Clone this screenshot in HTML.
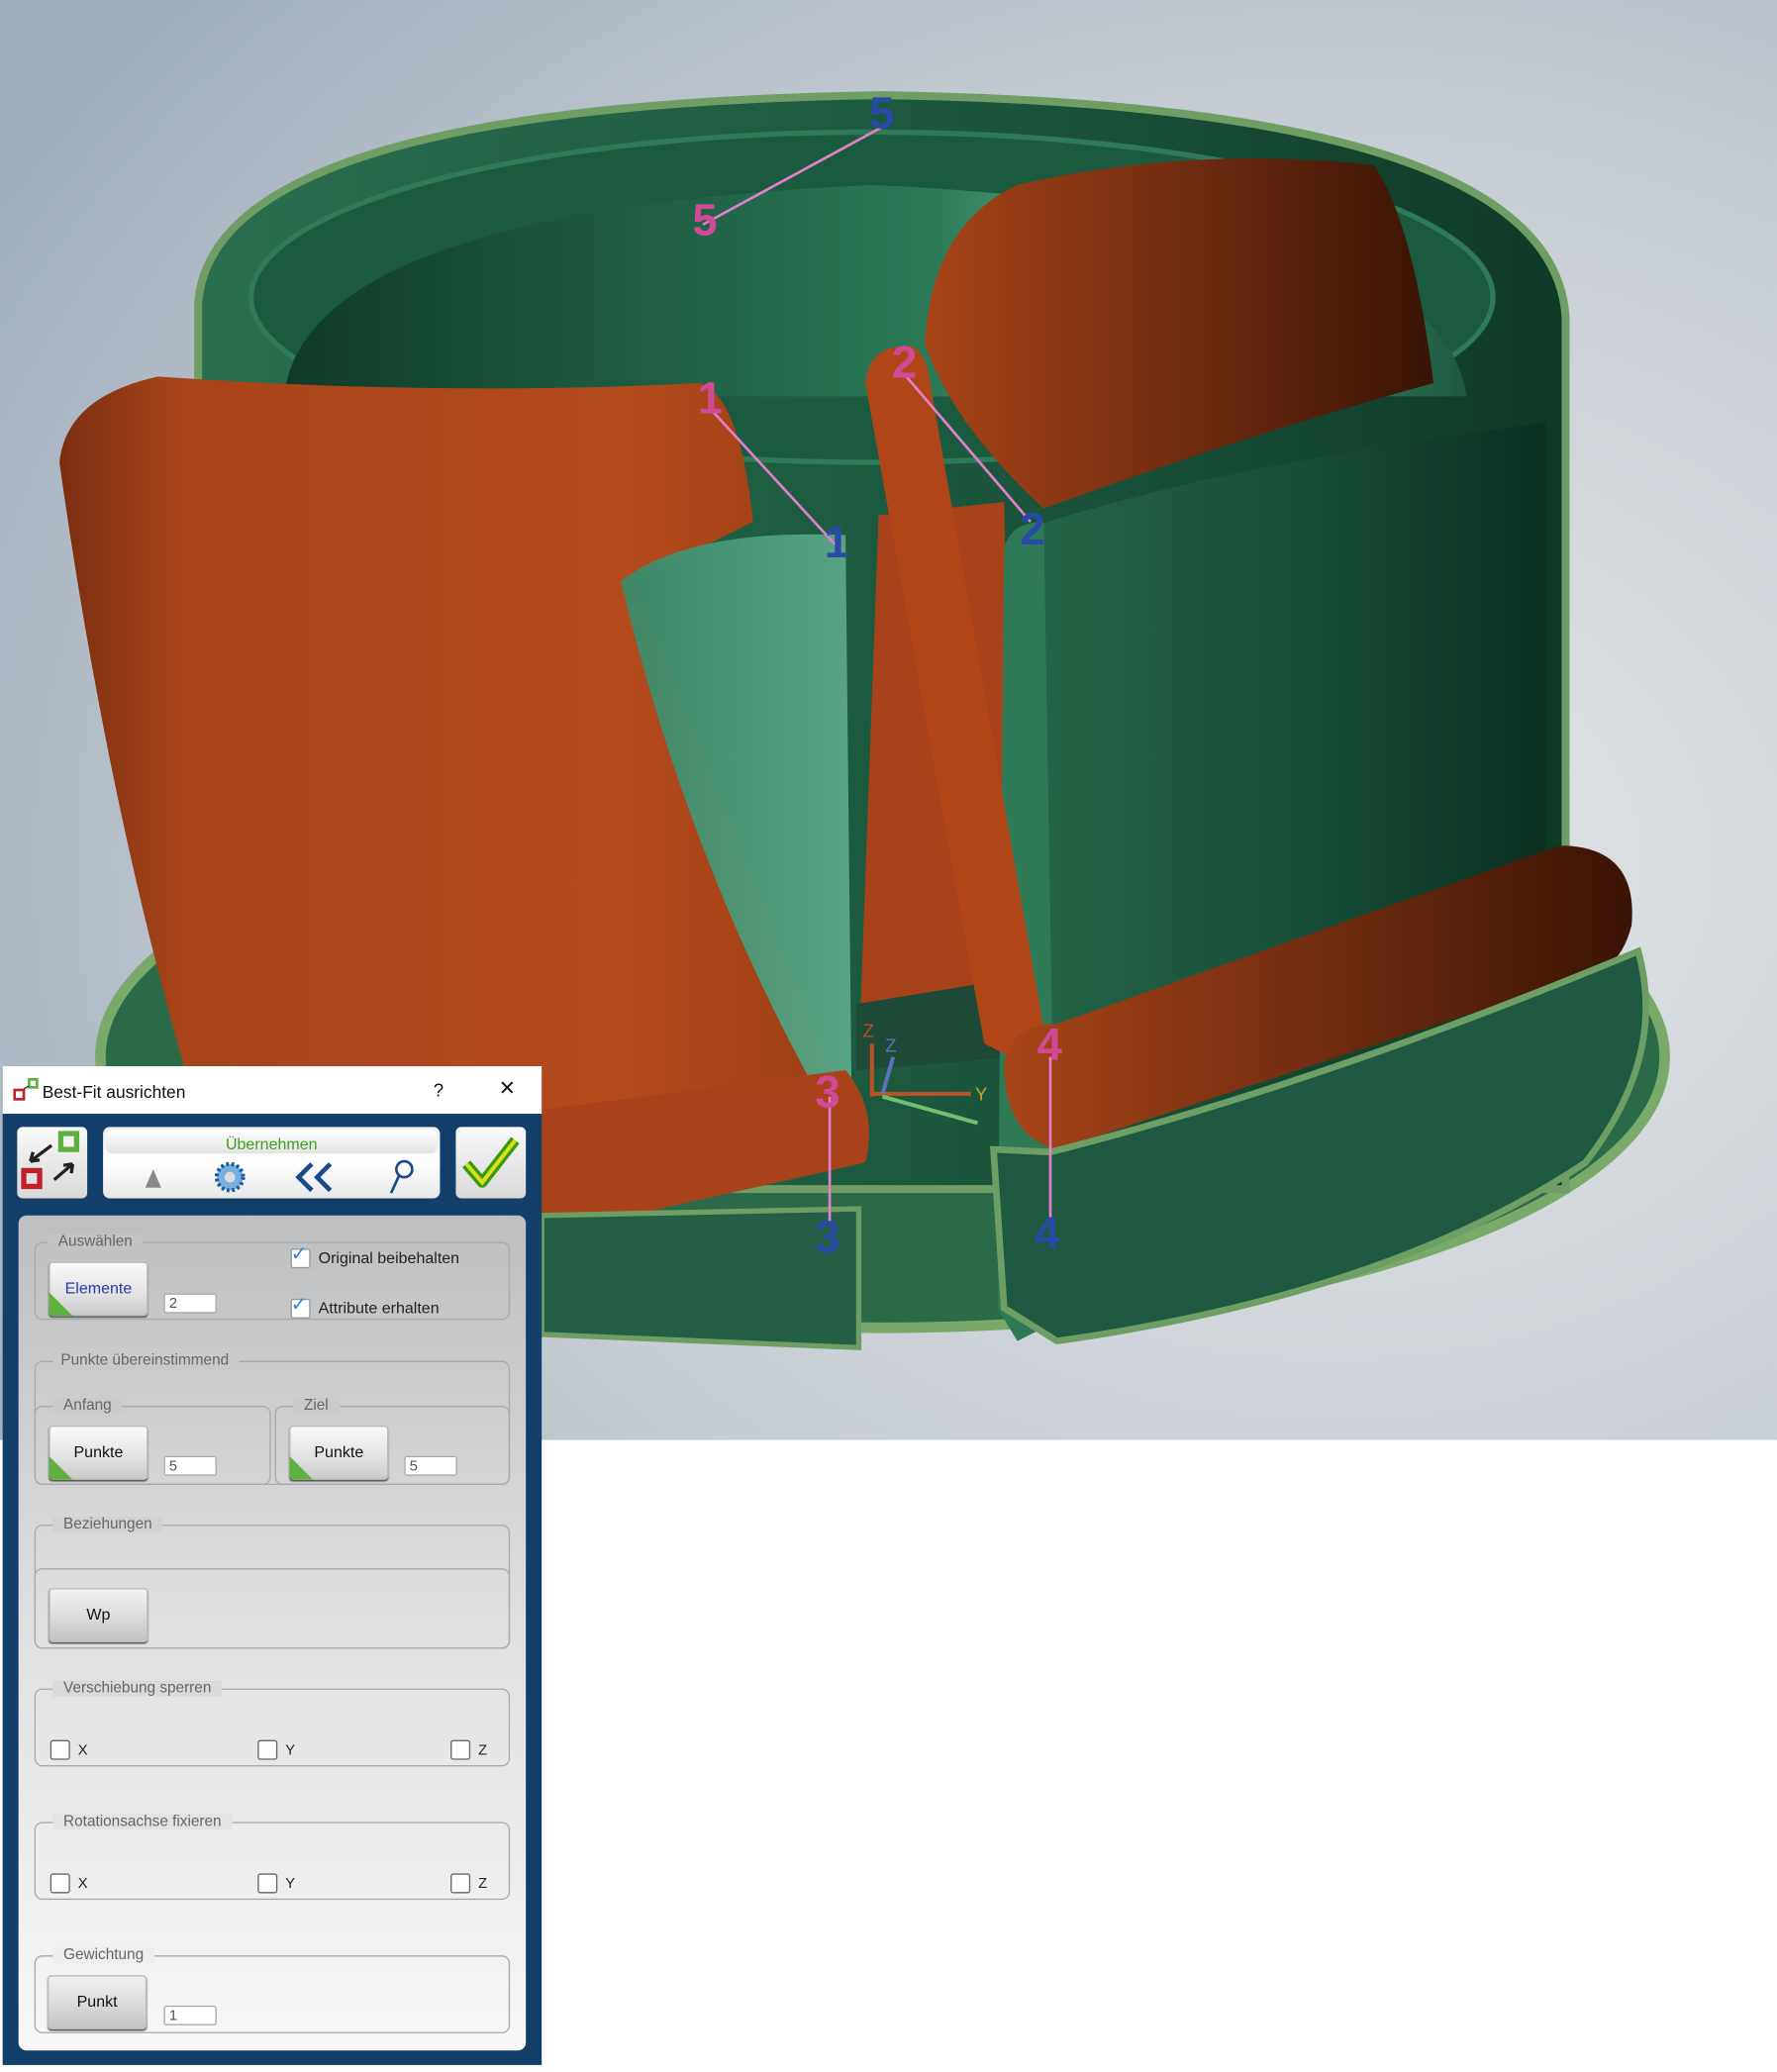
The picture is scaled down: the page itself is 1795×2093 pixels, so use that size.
<!DOCTYPE html>
<html><head><meta charset="utf-8"><style>
html,body{margin:0;padding:0;background:#fff;width:1795px;height:2092px;overflow:hidden}
#w{position:absolute;left:0;top:0;width:1345px;height:1568px;transform:scale(1.33457);transform-origin:0 0;font-family:"Liberation Sans",sans-serif}
.a{position:absolute}
.dlg{left:2px;top:807px;width:408px;height:756px;background:#123f6a}
.tb{left:0;top:0;width:408px;height:36px;background:#fff;font-size:13px;color:#111}
.btn{position:absolute;width:75px;height:41px;border-radius:3px;background:linear-gradient(#fbfbfb,#e2e2e2 60%,#c9c9c9);box-shadow:0 1px 1px #555,inset 0 0 0 1px #bbb;font-size:12px;text-align:center;line-height:41px;color:#111;overflow:hidden}
.btn i{position:absolute;left:0;bottom:0;width:0;height:0;border-left:18px solid #5fb040;border-top:18px solid transparent}
.inp{position:absolute;width:40px;height:15px;background:#fff;border:1px solid #aaa;border-radius:2px;font-size:11px;color:#555;line-height:15px;padding-left:3px;box-sizing:border-box}
.grp{position:absolute;border:1px solid #aaa;border-radius:6px}
.lg{position:absolute;font-size:11.5px;color:#666;background:transparent}
.cb{position:absolute;width:13px;height:13px;border:1px solid #666;border-radius:2px;background:#fff}
.cl{position:absolute;font-size:12px;color:#222}
</style></head><body><div id="w">
<svg class="a" style="left:0;top:0" width="1345" height="1090" viewBox="0 0 1345 1090">
<defs>
<radialGradient id="bg" cx="0.75" cy="0.6" r="0.9"><stop offset="0" stop-color="#e3e6e8"/><stop offset="0.6" stop-color="#c4cbd2"/><stop offset="1" stop-color="#9eacbb"/></radialGradient>
<linearGradient id="gr" x1="0" x2="1"><stop offset="0" stop-color="#2a6e50"/><stop offset="0.5" stop-color="#1c5a40"/><stop offset="1" stop-color="#0e3a28"/></linearGradient>
<linearGradient id="gb" x1="0" x2="1"><stop offset="0" stop-color="#24684a"/><stop offset="0.6" stop-color="#154a34"/><stop offset="1" stop-color="#0c3022"/></linearGradient>
<linearGradient id="or" x1="0" x2="1"><stop offset="0" stop-color="#7a2e10"/><stop offset="0.15" stop-color="#a8441a"/><stop offset="0.7" stop-color="#b34a1c"/><stop offset="1" stop-color="#9a3c14"/></linearGradient>
<linearGradient id="or2" x1="0" x2="1"><stop offset="0" stop-color="#a84418"/><stop offset="1" stop-color="#3a1406"/></linearGradient>
<linearGradient id="gl" x1="0" x2="1"><stop offset="0" stop-color="#3b8a6a"/><stop offset="1" stop-color="#5aa888"/></linearGradient>
<linearGradient id="iw" x1="0" x2="1"><stop offset="0" stop-color="#0f3a28"/><stop offset="0.55" stop-color="#2a7a58"/><stop offset="0.7" stop-color="#5aa888"/><stop offset="1" stop-color="#1c5a40"/></linearGradient>
</defs>
<rect width="1345" height="1090" fill="url(#bg)"/>
<ellipse cx="668" cy="800" rx="592" ry="205" fill="#2a6a48" stroke="#79aa6a" stroke-width="8"/>
<path d="M150 230 Q160 80 668 72 Q1175 80 1185 240 L1185 900 L150 900Z" fill="url(#gr)" stroke="#6e9e64" stroke-width="6"/>
<ellipse cx="660" cy="225" rx="470" ry="125" fill="#1a5a3e" stroke="#2f7a58" stroke-width="4"/>
<path d="M215 300 Q230 160 660 140 Q1090 160 1110 300 Z" fill="url(#iw)"/>
<path d="M700 260 Q705 170 770 140 Q900 110 1040 125 Q1070 170 1085 290 Q940 330 790 385 Q720 320 700 260Z" fill="url(#or2)"/>
<path d="M665 390 L760 380 L770 790 L650 800Z" fill="#a8421a"/>
<path d="M648 760 L770 740 L770 800 L648 810Z" fill="#1c4a36"/>
<path d="M765 405 Q900 355 1170 320 L1170 690 L780 795 Z" fill="url(#gb)"/>
<path d="M760 415 Q765 395 790 395 L800 1000 L770 1015 L755 990Z" fill="#2e7a56"/>
<path d="M45 350 Q50 300 120 285 Q330 300 530 290 Q560 300 570 395 L480 440 L600 740 L655 870 L420 900 L140 810 Q80 600 45 350Z" fill="url(#or)"/>
<path d="M470 440 Q520 400 640 405 L645 870 L620 830 Q520 650 470 440Z" fill="url(#gl)" opacity="0.95"/>
<path d="M655 290 Q658 260 690 262 Q702 268 704 290 L792 790 Q780 815 765 800 L745 790 Z" fill="#b04618"/>
<path d="M760 805 Q765 775 800 775 L1180 640 Q1240 640 1235 700 Q1225 742 1180 745 L800 870 Q760 860 760 805Z" fill="url(#or2)"/>
<path d="M752 870 L795 872 Q1000 820 1240 720 Q1262 800 1200 880 Q1050 980 800 1015 L760 990Z" fill="#1e5a42" stroke="#6e9e64" stroke-width="5"/>
<path d="M410 840 L640 810 Q665 840 655 880 L410 935Z" fill="#a8421a"/>
<path d="M410 920 L650 915 L650 1020 L410 1010Z" fill="#235f44" stroke="#6e9e64" stroke-width="4"/>
<g stroke="#e080c8" stroke-width="2" fill="none"><path d="M668 96 L532 170"/><path d="M540 312 L632 412"/><path d="M686 285 L780 395"/><path d="M628 830 L628 925"/><path d="M795 800 L795 925"/></g>
<g stroke-width="3"><path d="M660 790 L660 830" stroke="#c05020"/><path d="M660 828 L735 828" stroke="#c05020"/><path d="M668 830 L740 850" stroke="#70c070"/><path d="M668 828 L676 800" stroke="#6070c0"/></g>
<g font-family="Liberation Sans,sans-serif" font-size="34" font-weight="bold">
<text x="524" y="178" fill="#d04a98">5</text><text x="658" y="97" fill="#2a4aa8">5</text>
<text x="528" y="313" fill="#d04a98">1</text><text x="624" y="422" fill="#2a4aa8">1</text>
<text x="675" y="286" fill="#d04a98">2</text><text x="772" y="412" fill="#2a4aa8">2</text>
<text x="617" y="838" fill="#d04a98">3</text><text x="617" y="948" fill="#2a4aa8">3</text>
<text x="785" y="802" fill="#d04a98">4</text><text x="783" y="945" fill="#2a4aa8">4</text>
</g>
<g font-family="Liberation Sans,sans-serif" font-size="14"><text x="653" y="785" fill="#c05020">Z</text><text x="670" y="796" fill="#6070c0">Z</text><text x="738" y="833" fill="#d0a020">Y</text></g>
</svg>
<div class="a dlg">
<div class="a tb"><svg class="a" style="left:8px;top:9px" width="20" height="18"><rect x="1" y="9" width="7" height="7" fill="none" stroke="#c0202a" stroke-width="2"/><rect x="12" y="1" width="6" height="6" fill="none" stroke="#5fb040" stroke-width="2"/><path d="M8 8 L12 6" stroke="#333"/></svg><span class="a" style="left:30px;top:12px">Best-Fit ausrichten</span><span class="a" style="left:326px;top:10px;font-size:14px">?</span><span class="a" style="left:376px;top:6px;font-size:20px;font-weight:300">×</span></div>
<div class="a" style="left:11px;top:46px;width:53px;height:54px;border-radius:4px;background:linear-gradient(#fafafa,#d8d8d8)"><svg width="53" height="54"><rect x="33" y="5" width="12" height="12" fill="none" stroke="#5fb040" stroke-width="4"/><rect x="5" y="33" width="12" height="12" fill="none" stroke="#c0202a" stroke-width="4"/><path d="M26 14 L10 26 M10 26 l2-7 M10 26 l7-1 M28 40 L42 28 M42 28 l-7 1 M42 28 l-1 7" stroke="#222" stroke-width="2.5" fill="none"/></svg></div>
<div class="a" style="left:76px;top:46px;width:255px;height:54px;border-radius:5px;background:linear-gradient(#eee,#fff 50%,#e8e8e8)"><div style="position:absolute;left:2px;top:2px;width:251px;height:18px;border-radius:5px;background:linear-gradient(#fff,#e3e3e3);text-align:center;font-size:12px;color:#3aa020;line-height:22px">Übernehmen</div>
<svg class="a" style="left:0;top:20px" width="255" height="34"><path d="M32 26 L38 12 L44 26Z" fill="#888"/><circle cx="96" cy="18" r="10" fill="#7ab0e0" stroke="#1a5a9a" stroke-width="3" stroke-dasharray="2 2"/><circle cx="96" cy="18" r="4" fill="#ddd"/><path d="M158 8 L148 18 L158 28 M172 8 L162 18 L172 28" stroke="#1a4a8a" stroke-width="3.5" fill="none"/><circle cx="228" cy="12" r="6" fill="none" stroke="#1a4a8a" stroke-width="2"/><path d="M224 17 L218 30" stroke="#1a4a8a" stroke-width="2"/></svg></div>
<div class="a" style="left:343px;top:46px;width:53px;height:54px;border-radius:4px;background:linear-gradient(#fafafa,#d8d8d8)"><svg width="53" height="54"><path d="M8 28 L20 42 L45 10" stroke="#3a9a10" stroke-width="8" fill="none" stroke-linejoin="round"/><path d="M8 28 L20 42 L45 10" stroke="#d8e020" stroke-width="3" fill="none"/></svg></div>
<div class="a" style="left:12px;top:113px;width:384px;height:632px;border-radius:6px;background:linear-gradient(#bdbfc1,#dfe0e1 50%,#f8f8f8)">
<div class="grp" style="left:12px;top:20px;width:358px;height:57px"></div><div class="lg" style="left:22px;top:14px;background:#c1c3c5;padding:0 8px">Auswählen</div>
<div class="btn" style="left:23px;top:35px;color:#2a3aa8"><i></i>Elemente</div><div class="inp" style="left:110px;top:59px">2</div>
<div class="cb" style="left:206px;top:25px;border-color:#999"></div><span class="a" style="left:206px;top:20px;color:#2a8ad8;font-size:15px">✓</span><div class="cl" style="left:227px;top:25px">Original beibehalten</div>
<div class="cb" style="left:206px;top:63px;border-color:#999"></div><span class="a" style="left:206px;top:58px;color:#2a8ad8;font-size:15px">✓</span><div class="cl" style="left:227px;top:63px">Attribute erhalten</div>
<div class="grp" style="left:12px;top:110px;width:358px;height:92px"></div><div class="lg" style="left:26px;top:104px;background:#c9cacc;padding:0 8px 0 6px">Punkte übereinstimmend</div>
<div class="grp" style="left:12px;top:144px;width:177px;height:58px"></div><div class="lg" style="left:26px;top:138px;background:#cacbcd;padding:0 8px 0 8px">Anfang</div>
<div class="grp" style="left:194px;top:144px;width:176px;height:58px"></div><div class="lg" style="left:208px;top:138px;background:#cacbcd;padding:0 8px 0 8px">Ziel</div>
<div class="btn" style="left:23px;top:159px"><i></i>Punkte</div><div class="inp" style="left:110px;top:182px">5</div>
<div class="btn" style="left:205px;top:159px"><i></i>Punkte</div><div class="inp" style="left:292px;top:182px">5</div>
<div class="grp" style="left:12px;top:234px;width:358px;height:92px"></div><div class="grp" style="left:12px;top:267px;width:358px;height:59px"></div><div class="lg" style="left:26px;top:228px;background:#d1d2d3;padding:0 8px 0 8px">Beziehungen</div>
<div class="btn" style="left:23px;top:282px;background:linear-gradient(#f3f3f3,#d8d8d8 60%,#c2c2c2)">Wp</div>
<div class="grp" style="left:12px;top:358px;width:358px;height:57px"></div><div class="lg" style="left:26px;top:352px;background:#d9dadb;padding:0 8px">Verschiebung sperren</div>
<div class="cb" style="left:24px;top:397px"></div><div class="cl" style="left:45px;top:399px;font-size:11px">X</div><div class="cb" style="left:181px;top:397px"></div><div class="cl" style="left:202px;top:399px;font-size:11px">Y</div><div class="cb" style="left:327px;top:397px"></div><div class="cl" style="left:348px;top:399px;font-size:11px">Z</div>
<div class="grp" style="left:12px;top:459px;width:358px;height:57px"></div><div class="lg" style="left:26px;top:453px;background:#e3e3e4;padding:0 8px">Rotationsachse fixieren</div>
<div class="cb" style="left:24px;top:498px"></div><div class="cl" style="left:45px;top:500px;font-size:11px">X</div><div class="cb" style="left:181px;top:498px"></div><div class="cl" style="left:202px;top:500px;font-size:11px">Y</div><div class="cb" style="left:327px;top:498px"></div><div class="cl" style="left:348px;top:500px;font-size:11px">Z</div>
<div class="grp" style="left:12px;top:560px;width:358px;height:57px"></div><div class="lg" style="left:26px;top:554px;background:#eeeeee;padding:0 8px">Gewichtung</div>
<div class="btn" style="left:22px;top:575px;background:linear-gradient(#f3f3f3,#d8d8d8 60%,#c2c2c2)">Punkt</div><div class="inp" style="left:110px;top:598px">1</div>
</div>
</div>
</div></body></html>
